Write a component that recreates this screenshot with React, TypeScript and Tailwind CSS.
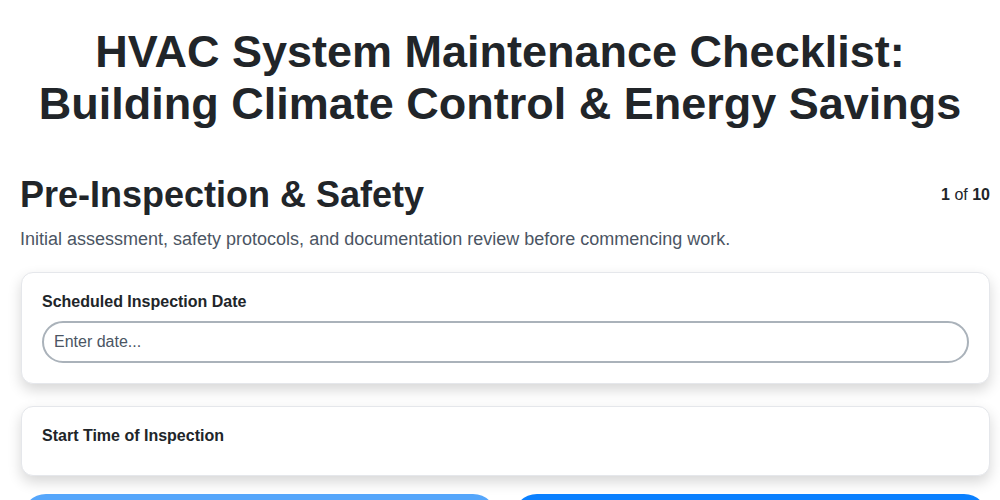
export default function App() {
  return (
    <div className="min-h-screen bg-white text-[#212529]" style={{ fontFamily: '"Liberation Sans", Arial, sans-serif' }}>
      <h1 className="pt-[26px] text-center text-[45px] font-bold leading-[52px]">
        HVAC System Maintenance Checklist:
        <br />
        Building Climate Control &amp; Energy Savings
      </h1>

      <div className="pl-5 pr-[10px]">
        <div className="mt-[41px] flex items-center justify-between">
          <h2 className="text-4xl font-bold leading-[48px]">Pre-Inspection &amp; Safety</h2>
          <span className="text-base">
            <b>1</b> of <b>10</b>
          </span>
        </div>
        <p className="mt-[6px] text-lg text-[#4b5563]">
          Initial assessment, safety protocols, and documentation review before commencing work.
        </p>

        <div className="mt-[19px] flex flex-col gap-[22px] pl-[1px]">
          <div className="rounded-xl border border-[#e5e7eb] bg-white px-5 pt-[19px] pb-5 shadow-[0_6px_14px_rgba(0,0,0,0.16)]">
            <label className="mb-[9px] block text-base font-bold leading-5">Scheduled Inspection Date</label>
            <input
              type="text"
              placeholder="Enter date..."
              className="h-[42px] w-full rounded-full border-2 border-[#aab2ba] px-[10px] text-base text-[#212529] placeholder:text-[#4b5563] outline-none"
            />
          </div>
          <div className="rounded-xl border border-[#e5e7eb] bg-white px-5 pt-[19px] pb-[21px] shadow-[0_6px_14px_rgba(0,0,0,0.16)]">
            <label className="mb-2 block text-base font-bold leading-5">Start Time of Inspection</label>
          </div>
        </div>

        <div className="mt-[18px] flex gap-4 pl-[2px] pr-[2px]">
          <button className="h-12 flex-1 rounded-3xl bg-[#55a6fb] text-lg font-bold text-white">Previous</button>
          <button className="h-12 flex-1 rounded-3xl bg-[#0a80ff] text-lg font-bold text-white">Next</button>
        </div>
      </div>
    </div>
  );
}
